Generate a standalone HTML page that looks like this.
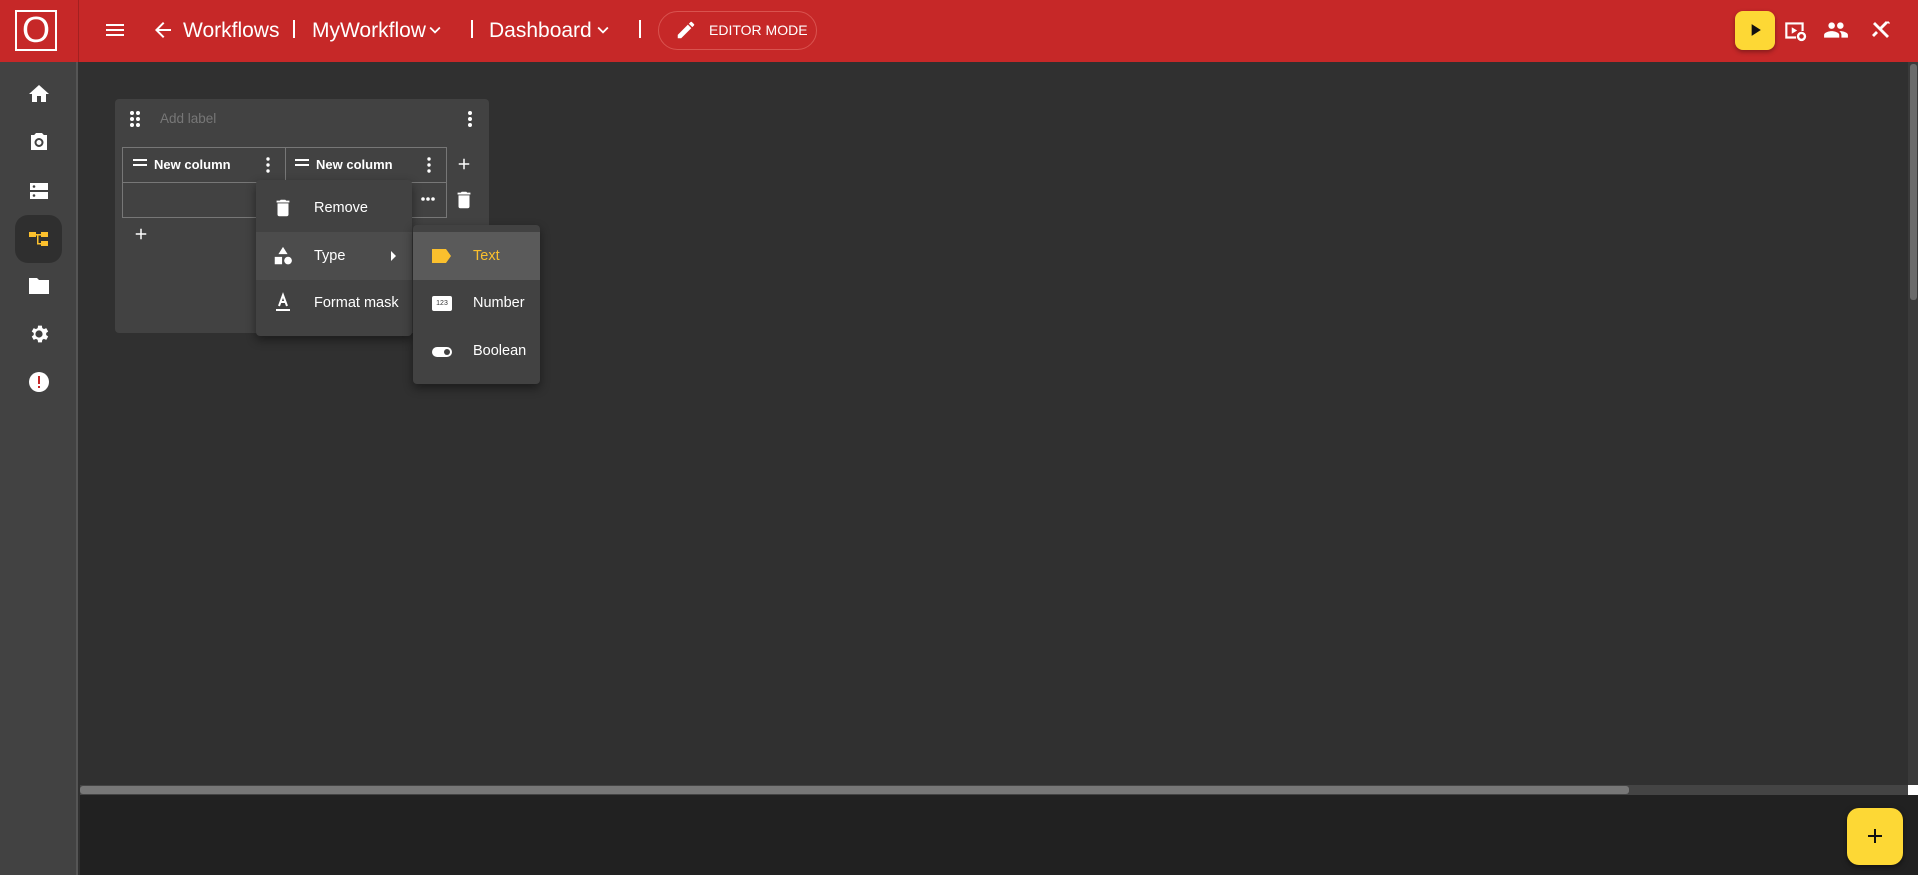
<!DOCTYPE html>
<html><head><meta charset="utf-8"><style>
*{box-sizing:border-box;margin:0;padding:0}
body{width:1918px;height:875px;overflow:hidden;background:#303030;font-family:"Liberation Sans",Roboto,sans-serif;position:relative;color:#fff}
.a{position:absolute}
svg{display:block}
.hdr{left:0;top:0;width:1918px;height:62px;background:#c62828}
.side{left:0;top:62px;width:78px;height:813px;background:#424242;border-right:2px solid #555}
.t{font-size:21px;color:#fff;top:19px;white-space:nowrap}
.sep{width:2px;height:18px;background:#fff;top:20px}
.mi{font-size:14.5px;color:#fff;white-space:nowrap}
</style></head><body>
<div class="a hdr"></div>
<div class="a" style="left:78px;top:0;width:1px;height:62px;background:#a32020"></div>
<!-- logo -->
<div class="a" style="left:15px;top:10px;width:42px;height:41px;border:2px solid #fff"></div>
<div class="a" style="left:18px;top:11px;width:36px;height:38px;font-size:36px;line-height:38px;text-align:center;color:#fff">O</div>
<!-- menu -->
<svg class="a" style="left:103px;top:18px" width="24" height="24" viewBox="0 0 24 24"><path d="M3 18h18v-2H3v2zm0-5h18v-2H3v2zm0-7v2h18V6H3z" fill="#fff"/></svg>
<svg class="a" style="left:151px;top:18px" width="24" height="24" viewBox="0 0 24 24"><path d="M20 11H7.83l5.59-5.59L12 4l-8 8 8 8 1.41-1.41L7.83 13H20v-2z" fill="#fff"/></svg>
<div class="a t" style="left:183px">Workflows</div>
<div class="a sep" style="left:293px"></div>
<div class="a t" style="left:312px">MyWorkflow</div>
<svg class="a" style="left:424px;top:19px" width="22" height="22" viewBox="0 0 24 24"><path d="M7.41 8.59 12 13.17l4.59-4.58L18 10l-6 6-6-6z" fill="#fff"/></svg>
<div class="a sep" style="left:471px"></div>
<div class="a t" style="left:489px">Dashboard</div>
<svg class="a" style="left:592px;top:19px" width="22" height="22" viewBox="0 0 24 24"><path d="M7.41 8.59 12 13.17l4.59-4.58L18 10l-6 6-6-6z" fill="#fff"/></svg>
<div class="a sep" style="left:639px"></div>
<div class="a" style="left:658px;top:11px;width:159px;height:39px;border:1px solid #d9534f;border-radius:20px"></div>
<svg class="a" style="left:675px;top:19px" width="22" height="22" viewBox="0 0 24 24"><path d="M3 17.25V21h3.75L17.81 9.94l-3.75-3.75L3 17.25zM20.71 7.04a1 1 0 0 0 0-1.41l-2.34-2.34a1 1 0 0 0-1.41 0l-1.83 1.83 3.75 3.75 1.83-1.83z" fill="#fff"/></svg>
<div class="a" style="left:709px;top:22px;font-size:14px;color:#fff">EDITOR MODE</div>
<!-- right icons -->
<div class="a" style="left:1735px;top:11px;width:40px;height:39px;background:#fdd835;border-radius:8px;box-shadow:0 2px 5px rgba(0,0,0,.35)"></div>
<svg class="a" style="left:1745px;top:20px" width="20" height="20" viewBox="0 0 24 24"><path d="M8 5v14l11-7z" fill="#111"/></svg>
<svg class="a" style="left:1782px;top:18px" width="26" height="26" viewBox="0 0 24 24"><path d="M3 4h17v8h-2V6H5v11h8v2H3z M9 8.5v6l5-3z" fill="#fff"/><circle cx="18" cy="17" r="3.2" fill="none" stroke="#fff" stroke-width="2.2"/></svg>
<svg class="a" style="left:1823px;top:17px" width="26" height="26" viewBox="0 0 24 24"><path d="M16 11c1.66 0 2.99-1.34 2.99-3S17.66 5 16 5c-1.66 0-3 1.34-3 3s1.34 3 3 3zm-8 0c1.66 0 2.99-1.34 2.99-3S9.66 5 8 5C6.34 5 5 6.34 5 8s1.34 3 3 3zm0 2c-2.33 0-7 1.17-7 3.5V19h14v-2.5c0-2.33-4.67-3.5-7-3.5zm8 0c-.29 0-.62.02-.97.05 1.16.84 1.97 1.97 1.97 3.45V19h6v-2.5c0-2.33-4.67-3.5-7-3.5z" fill="#fff"/></svg>
<svg class="a" style="left:1869px;top:18px" width="24" height="24" viewBox="0 0 24 24"><path d="M4 6l2-2 14 14-2 2z M13 11l6-6 1 1 1-1-2-2-1 1 -1-1-6 6z M3 17l4-4 2 2-4 4z" fill="#fff"/></svg>
<!-- sidebar -->
<div class="a side"></div>
<div class="a" style="left:15px;top:215px;width:47px;height:48px;background:#2f2f2f;border-radius:13px"></div>
<svg class="a" style="left:27px;top:82px" width="24" height="24" viewBox="0 0 24 24"><path d="M10 20v-6h4v6h5v-8h3L12 3 2 12h3v8z" fill="#fff"/></svg>
<svg class="a" style="left:27px;top:130px" width="24" height="24" viewBox="0 0 24 24"><path d="M9 3 7.17 5H4v15h16V5h-3.17L15 3H9zm3 14a4.5 4.5 0 1 1 0-9 4.5 4.5 0 0 1 0 9zm0-2a2.5 2.5 0 1 0 0-5 2.5 2.5 0 0 0 0 5z" fill="#fff"/></svg>
<svg class="a" style="left:27px;top:179px" width="24" height="24" viewBox="0 0 24 24"><path d="M3 4h18v7H3zM3 13h18v7H3z" fill="#fff"/><circle cx="7" cy="7.5" r="1.3" fill="#424242"/><circle cx="7" cy="16.5" r="1.3" fill="#424242"/></svg>
<svg class="a" style="left:27px;top:227px" width="24" height="24" viewBox="0 0 24 24"><path d="M2 5h7v5H2zM14 5h7v5h-7zM14 14h7v5h-7zM9 7h5v1.5h-2.5V16H14v1.5h-4V8.5H9z" fill="#fbc02d"/></svg>
<svg class="a" style="left:27px;top:274px" width="24" height="24" viewBox="0 0 24 24"><path d="M10 4H2v16h20V6H12z" fill="#fff"/></svg>
<svg class="a" style="left:27px;top:322px" width="24" height="24" viewBox="0 0 24 24"><path d="M19.14 12.94a7 7 0 0 0 0-1.88l2.03-1.58-1.92-3.32-2.39.96a7 7 0 0 0-1.62-.94L14.88 3.6h-3.84l-.36 2.58a7 7 0 0 0-1.62.94l-2.39-.96-1.92 3.32 2.03 1.58a7 7 0 0 0 0 1.88l-2.03 1.58 1.92 3.32 2.39-.96c.5.38 1.04.7 1.62.94l.36 2.58h3.84l.36-2.58a7 7 0 0 0 1.62-.94l2.39.96 1.92-3.32zM12 15.6a3.6 3.6 0 1 1 0-7.2 3.6 3.6 0 0 1 0 7.2z" fill="#fff"/></svg>
<svg class="a" style="left:27px;top:370px" width="24" height="24" viewBox="0 0 24 24"><circle cx="12" cy="12" r="10" fill="#fff"/><path d="M11 6h2v8h-2zM11 16h2v2h-2z" fill="#c62828"/></svg>
<!-- scrollbars -->
<div class="a" style="left:1908px;top:62px;width:10px;height:723px;background:#3a3a3a"></div>
<div class="a" style="left:1910px;top:64px;width:7px;height:236px;background:#6b6b6b;border-radius:3px"></div>
<div class="a" style="left:80px;top:785px;width:1828px;height:10px;background:#444"></div>
<div class="a" style="left:80px;top:786px;width:1549px;height:8px;background:#777;border-radius:3px"></div>
<div class="a" style="left:1908px;top:785px;width:10px;height:10px;background:#fff"></div>
<div class="a" style="left:80px;top:795px;width:1838px;height:80px;background:#212121"></div>
<div class="a" style="left:1847px;top:808px;width:56px;height:57px;background:#fdd835;border-radius:12px;box-shadow:0 2px 6px rgba(0,0,0,.5)"></div>
<svg class="a" style="left:1863px;top:824px" width="24" height="24" viewBox="0 0 24 24"><path d="M19 13h-6v6h-2v-6H5v-2h6V5h2v6h6z" fill="#111"/></svg>
<!-- widget card -->
<div class="a" style="left:115px;top:99px;width:374px;height:234px;background:#424242;border-radius:4px"></div>
<svg class="a" style="left:128px;top:110px" width="14" height="18" viewBox="0 0 14 18"><g fill="#fff"><circle cx="4" cy="3" r="2"/><circle cx="10" cy="3" r="2"/><circle cx="4" cy="9" r="2"/><circle cx="10" cy="9" r="2"/><circle cx="4" cy="15" r="2"/><circle cx="10" cy="15" r="2"/></g></svg>
<div class="a" style="left:160px;top:111px;font-size:13.5px;color:#777">Add label</div>
<svg class="a" style="left:466px;top:110px" width="8" height="18" viewBox="0 0 8 18"><g fill="#fff"><circle cx="4" cy="3" r="2"/><circle cx="4" cy="9" r="2"/><circle cx="4" cy="15" r="2"/></g></svg>
<div class="a" style="left:122px;top:147px;width:325px;height:71px;border:1px solid #777"></div>
<div class="a" style="left:285px;top:147px;width:1px;height:36px;background:#777"></div>
<div class="a" style="left:122px;top:182px;width:325px;height:1px;background:#777"></div>
<svg class="a" style="left:133px;top:159px" width="16" height="8"><path d="M0 1h14M0 6h14" stroke="#fff" stroke-width="2"/></svg>
<div class="a" style="left:154px;top:157px;font-size:13px;font-weight:bold">New column</div>
<svg class="a" style="left:264px;top:156px" width="8" height="18" viewBox="0 0 8 18"><g fill="#fff"><circle cx="4" cy="3" r="1.7"/><circle cx="4" cy="9" r="1.7"/><circle cx="4" cy="15" r="1.7"/></g></svg>
<svg class="a" style="left:295px;top:159px" width="16" height="8"><path d="M0 1h14M0 6h14" stroke="#fff" stroke-width="2"/></svg>
<div class="a" style="left:316px;top:157px;font-size:13px;font-weight:bold">New column</div>
<svg class="a" style="left:425px;top:156px" width="8" height="18" viewBox="0 0 8 18"><g fill="#fff"><circle cx="4" cy="3" r="1.7"/><circle cx="4" cy="9" r="1.7"/><circle cx="4" cy="15" r="1.7"/></g></svg>
<svg class="a" style="left:420px;top:196px" width="16" height="6"><g fill="#fff"><circle cx="3" cy="3" r="1.8"/><circle cx="8" cy="3" r="1.8"/><circle cx="13" cy="3" r="1.8"/></g></svg>
<svg class="a" style="left:455px;top:155px" width="18" height="18" viewBox="0 0 24 24"><path d="M19 13h-6v6h-2v-6H5v-2h6V5h2v6h6z" fill="#fff"/></svg>
<svg class="a" style="left:453px;top:189px" width="22" height="22" viewBox="0 0 24 24"><path d="M6 19a2 2 0 0 0 2 2h8a2 2 0 0 0 2-2V7H6v12zM19 4h-3.5l-1-1h-5l-1 1H5v2h14V4z" fill="#fff"/></svg>
<svg class="a" style="left:132px;top:225px" width="18" height="18" viewBox="0 0 24 24"><path d="M19 13h-6v6h-2v-6H5v-2h6V5h2v6h6z" fill="#fff"/></svg>
<!-- menu 1 -->
<div class="a" style="left:256px;top:180px;width:156px;height:156px;background:#424242;border-radius:4px;box-shadow:0 4px 10px rgba(0,0,0,.45)"></div>
<div class="a" style="left:256px;top:232px;width:156px;height:48px;background:#4c4c4c"></div>
<svg class="a" style="left:272px;top:197px" width="22" height="22" viewBox="0 0 24 24"><path d="M6 19a2 2 0 0 0 2 2h8a2 2 0 0 0 2-2V7H6v12zM19 4h-3.5l-1-1h-5l-1 1H5v2h14V4z" fill="#fff"/></svg>
<div class="a mi" style="left:314px;top:200px">Remove</div>
<svg class="a" style="left:272px;top:245px" width="22" height="22" viewBox="0 0 24 24"><path d="M12 2l5 8H7z M3 13h8v8H3z" fill="#fff"/><circle cx="17.5" cy="17" r="4.2" fill="#fff"/></svg>
<div class="a mi" style="left:314px;top:248px">Type</div>
<svg class="a" style="left:389px;top:250px" width="10" height="12"><path d="M2 1l5 5-5 5z" fill="#fff"/></svg>
<svg class="a" style="left:273px;top:292px" width="20" height="22" viewBox="0 0 20 22"><path d="M6 14L10 3l4 11M7.5 10h5" stroke="#fff" stroke-width="2" fill="none"/><path d="M3 18h14" stroke="#fff" stroke-width="2"/></svg>
<div class="a mi" style="left:314px;top:295px">Format mask</div>
<!-- menu 2 -->
<div class="a" style="left:413px;top:225px;width:127px;height:159px;background:#424242;border-radius:4px;box-shadow:0 4px 10px rgba(0,0,0,.45)"></div>
<div class="a" style="left:413px;top:232px;width:127px;height:48px;background:#5a5a5a"></div>
<svg class="a" style="left:431px;top:247px" width="22" height="18" viewBox="0 0 22 18"><path d="M1 2h14l5 7-5 7H1z" fill="#fbc02d"/></svg>
<div class="a mi" style="left:473px;top:248px;color:#fbc02d">Text</div>
<div class="a" style="left:432px;top:296px;width:20px;height:15px;background:#fff;border-radius:2px;font-size:7px;color:#333;text-align:center;line-height:15px">123</div>
<div class="a mi" style="left:473px;top:295px">Number</div>
<div class="a" style="left:432px;top:347px;width:20px;height:10px;background:#fff;border-radius:5px"></div>
<div class="a" style="left:444px;top:349px;width:6px;height:6px;background:#424242;border-radius:3px"></div>
<div class="a mi" style="left:473px;top:343px">Boolean</div>
</body></html>
